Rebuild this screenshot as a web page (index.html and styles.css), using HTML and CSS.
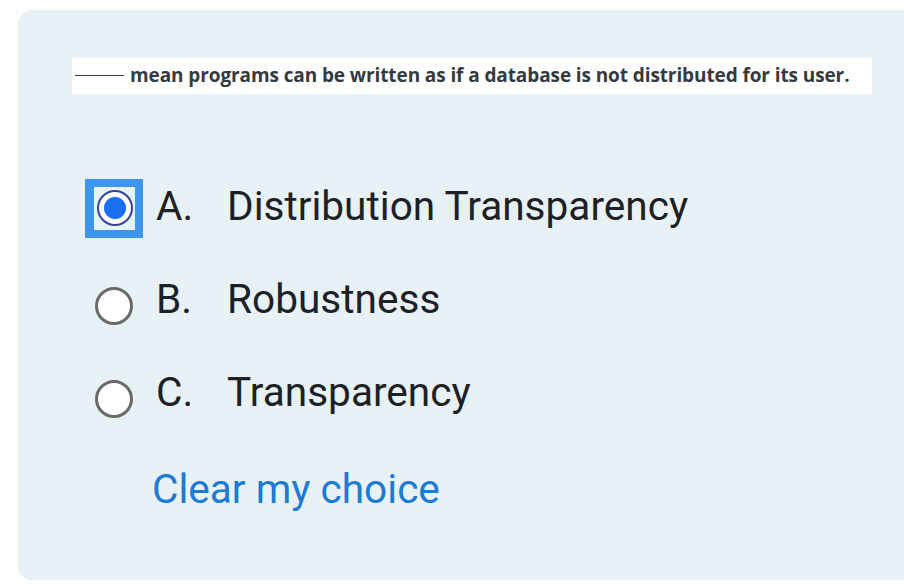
FILE: index.html
```html
<!DOCTYPE html>
<html>
<head>
<meta charset="utf-8">
<link rel="stylesheet" href="styles.css">
</head>
<body>
<div class="page">
  <div class="card">
    <div class="question"><span class="blank"></span>mean programs can be written as if a database is not distributed for its user.</div>
    <div class="options">
      <div class="option">
        <span class="radio-wrap selected"><span class="radio checked"></span></span>
        <span class="letter">A.</span>
        <span class="text">Distribution Transparency</span>
      </div>
      <div class="option">
        <span class="radio-wrap"><span class="radio"></span></span>
        <span class="letter">B.</span>
        <span class="text">Robustness</span>
      </div>
      <div class="option">
        <span class="radio-wrap"><span class="radio"></span></span>
        <span class="letter">C.</span>
        <span class="text">Transparency</span>
      </div>
    </div>
    <a class="clear">Clear my choice</a>
  </div>
</div>
</body>
</html>
```
FILE: styles.css
```css
html, body {
  margin: 0;
  padding: 0;
  background: #fdfefe;
  overflow: hidden;
}
.page {
  display: flex;
  width: 904px;
  height: 584px;
  padding: 10px 0 0 18px;
  box-sizing: border-box;
}
.card {
  flex: 1;
  margin-right: -30px;
  height: 570px;
  background: #e8f1f6;
  border-radius: 14px;
  display: flex;
  flex-direction: column;
  box-sizing: border-box;
  padding: 48px 0 0 54px;
}
.question {
  width: 800px;
  height: 36px;
  box-sizing: border-box;
  background: #ffffff;
  display: flex;
  align-items: center;
  padding-left: 3px;
  padding-bottom: 3px;
  font-family: "Open Sans", sans-serif;
  font-weight: 700;
  font-size: 19px;
  color: #343a40;
  letter-spacing: -0.1px;
  white-space: nowrap;
}
.blank {
  display: inline-block;
  width: 49px;
  height: 1.5px;
  background: #343a40;
  margin-right: 6px;
  position: relative;
  top: 1px;
}
.options {
  display: flex;
  flex-direction: column;
  margin-top: 65px;
  margin-left: 13px;
}
.option {
  display: flex;
  align-items: center;
  height: 93px;
  font-family: Roboto, sans-serif;
  font-size: 40.6px;
  color: #1d2125;
}
.radio-wrap {
  width: 58px;
  height: 59px;
  box-sizing: border-box;
  display: flex;
  align-items: center;
  justify-content: center;
  flex-shrink: 0;
  margin-top: 14px;
}
.radio-wrap.selected {
  margin-top: 5px;
  background: #e6f3f6;
  border: 8px solid #3d95ee;
  border-left-width: 9px;
}
.radio {
  width: 38px;
  height: 38px;
  box-sizing: border-box;
  border-radius: 50%;
  border: 3px solid #6a6a6a;
  background: #ffffff;
}
.radio.checked {
  width: 36px;
  height: 36px;
  border: 2.5px solid #3340a4;
  background: radial-gradient(circle, #1a6ff0 0 10.5px, #ffffff 11.5px);
}
.letter {
  width: 71px;
  margin-left: 13px;
  flex-shrink: 0;
}
.text {
  white-space: nowrap;
}
.clear {
  margin-top: 27px;
  margin-left: 80px;
  font-family: Roboto, sans-serif;
  font-size: 40.6px;
  color: #1c7bd3;
  text-decoration: none;
}
```
